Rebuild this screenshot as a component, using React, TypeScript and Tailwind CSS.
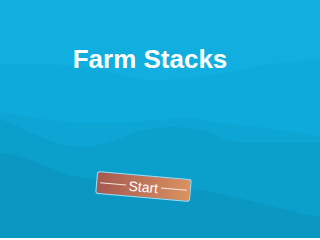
import React from "react";

export default function App() {
  return (
    <div
      className="relative w-full min-w-[300px] h-[238px] overflow-hidden bg-[#10afe0]"
      style={{ fontFamily: '"Liberation Sans", Arial, sans-serif' }}
    >
      <svg
        className="absolute left-0 top-0 w-[400px] h-[238px]"
        viewBox="0 0 400 238"
      >
        <path
          d="M0,65 C30,63 70,64 100,70 C125,76 140,81 160,80 C190,79 220,74 250,68 C270,64 285,62 300,61 C330,60 360,62 400,64 L400,238 L0,238 Z"
          fill="#0eaadb"
        />
        <path
          d="M0,112 C20,115 40,120 70,122 C100,124 130,122 160,120 C180,118 195,118 210,121 C235,126 270,127 300,133 C330,139 360,140 400,138 L400,238 L0,238 Z"
          fill="#0ca5d4"
        />
        <path
          d="M0,119 C20,126 45,142 70,146 C95,150 115,140 140,131 C160,126 185,126 205,131 C220,136 230,143 250,143 L400,143 L400,238 L0,238 Z"
          fill="#0b9fcc"
        />
        <path
          d="M0,153 C20,155 40,163 60,172 C75,178 90,178 110,180 C150,183 200,188 230,196 C260,203 280,208 300,213 C330,220 360,224 400,226 L400,238 L0,238 Z"
          fill="#0a98c3"
        />
      </svg>
      <div className="relative w-[300px] flex flex-col items-center pt-[46px]">
        <h1 className="text-[26px] leading-[26px] font-bold text-white">
          Farm Stacks
        </h1>
        <button className="mt-[103px] mr-[13px] w-[95px] h-[23px] rotate-[5deg] rounded-[3px] border border-[#a9dcef] bg-gradient-to-r from-[#a55950] to-[#da9260] flex items-center px-[3px] gap-[3px]">
          <span className="flex-1 h-px bg-[#f3e6e0]" />
          <span className="text-[14px] leading-none text-white">Start</span>
          <span className="flex-1 h-px bg-[#f3e6e0]" />
        </button>
      </div>
    </div>
  );
}
